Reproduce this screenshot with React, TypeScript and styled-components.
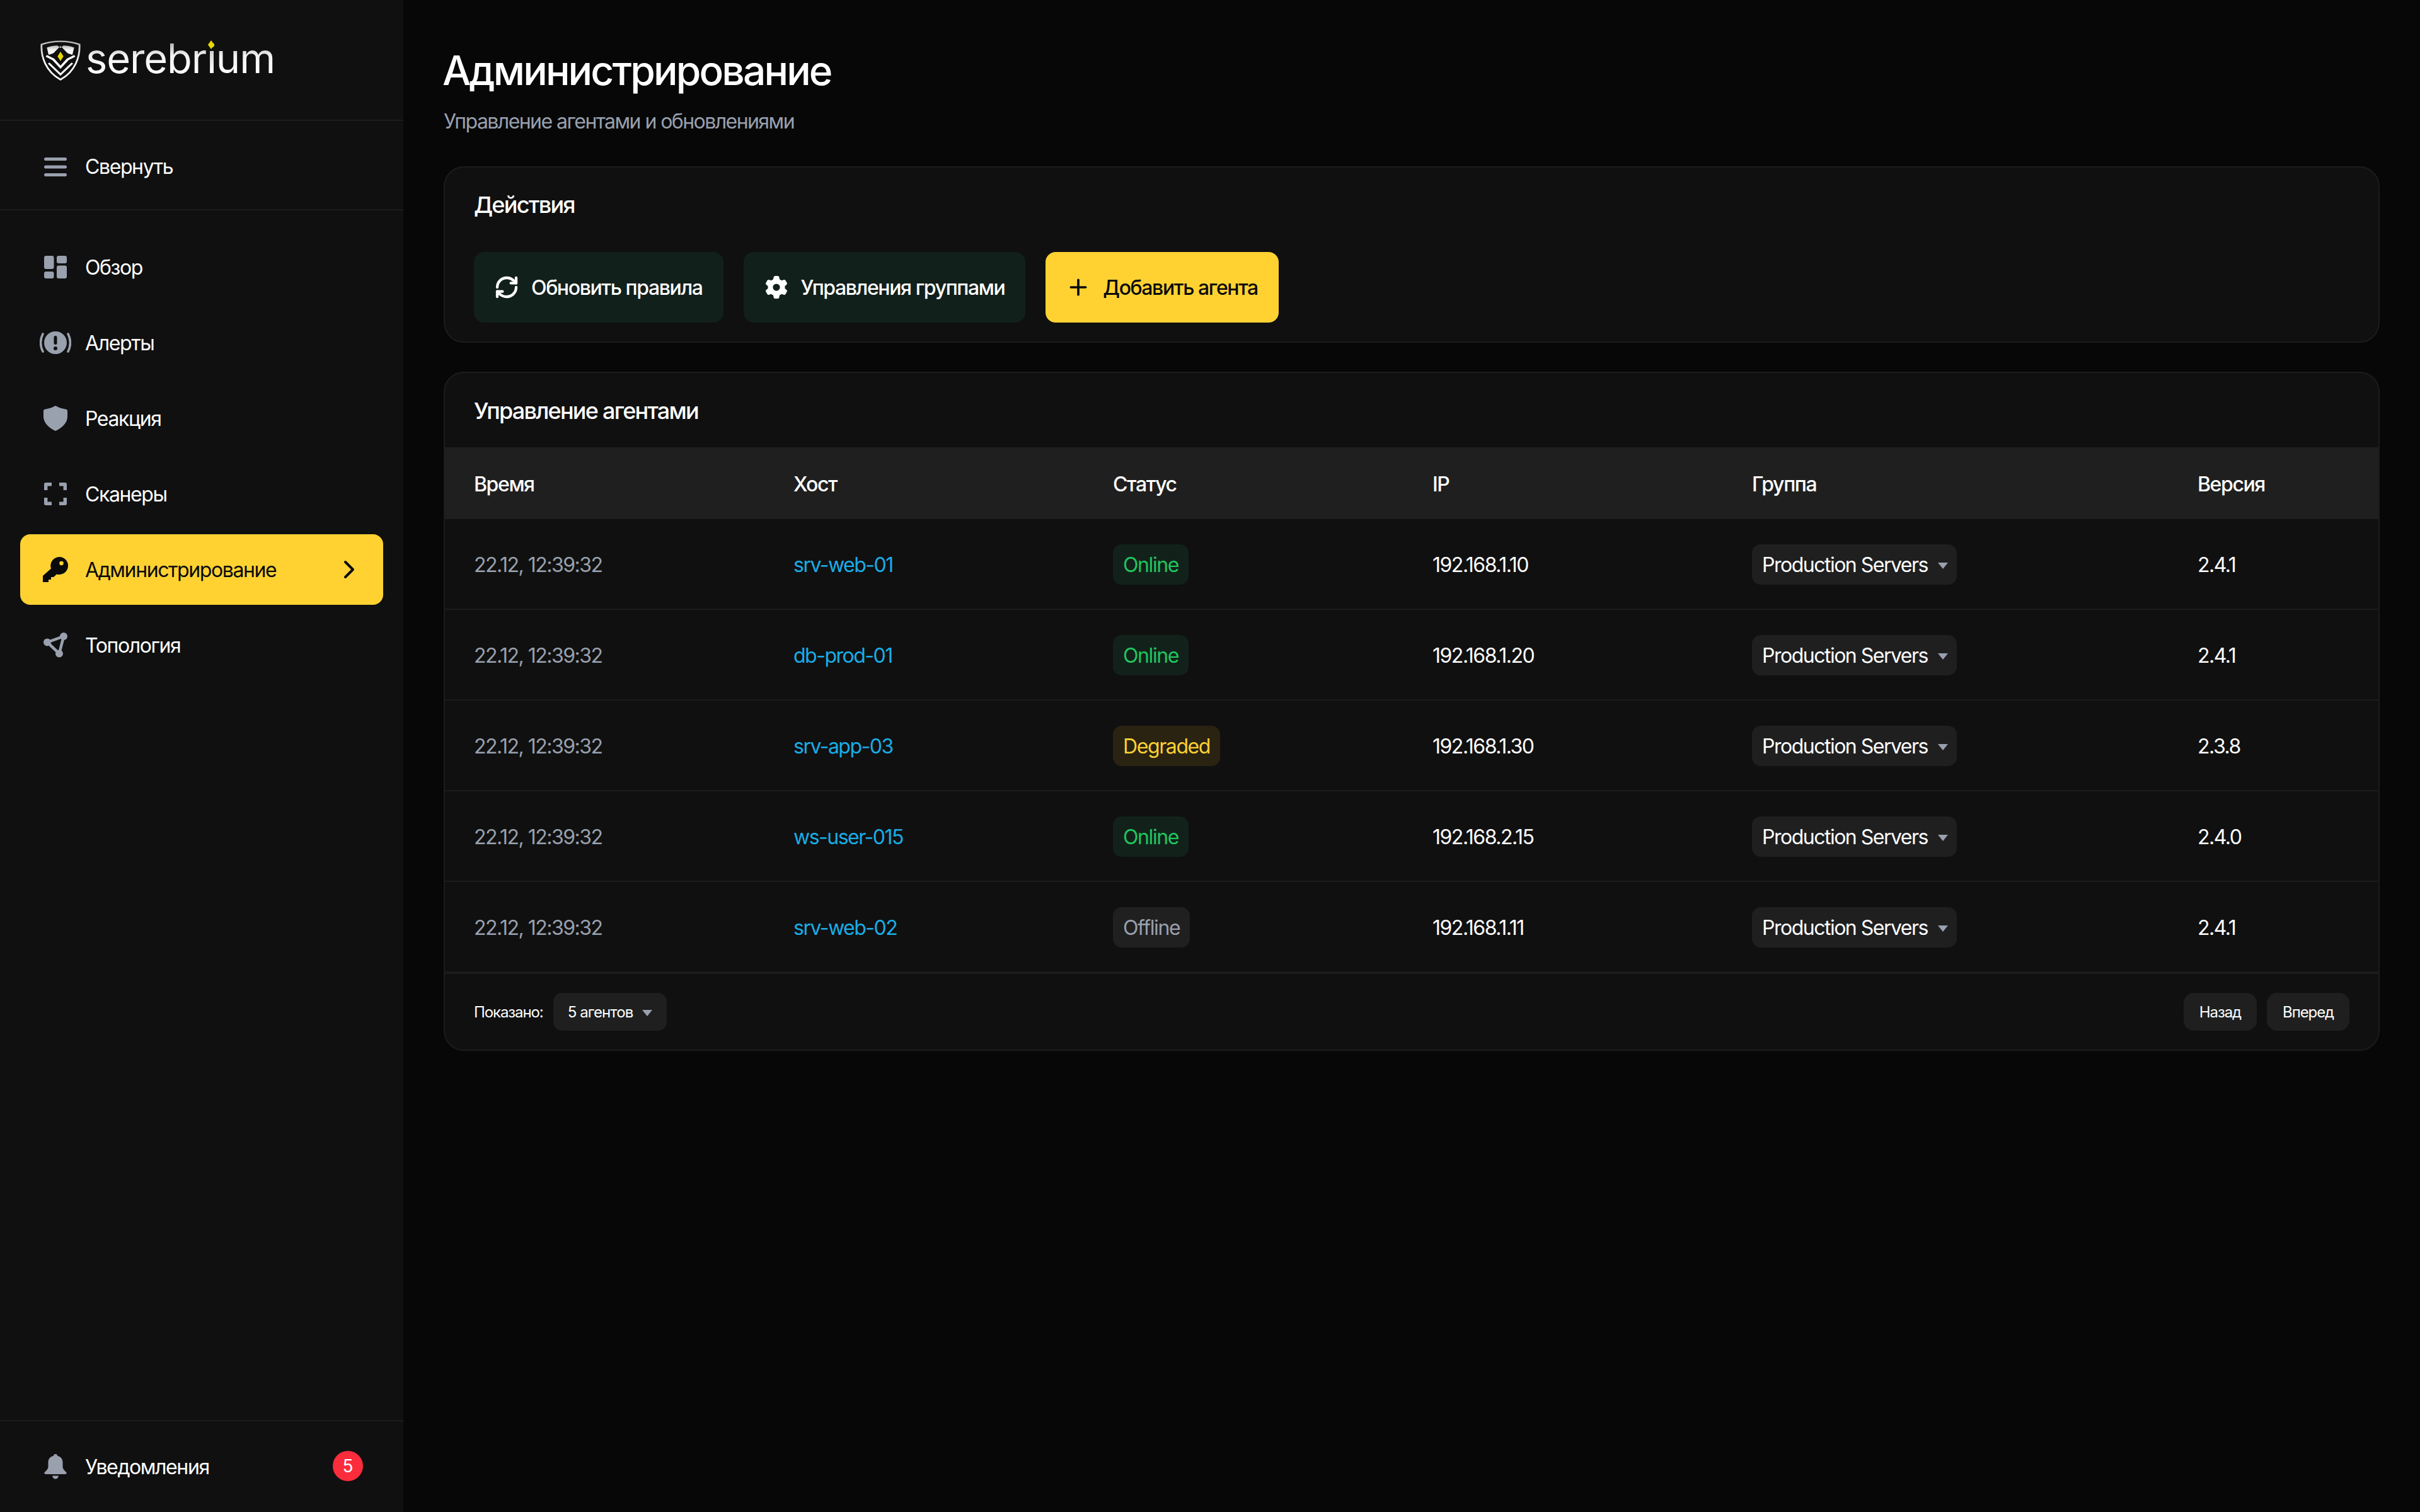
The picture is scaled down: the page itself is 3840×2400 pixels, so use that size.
import React from "react"
import styled, { createGlobalStyle } from "styled-components"
import { ChevronRight, Plus, RefreshCw } from "lucide-react"
import { FaGear } from "react-icons/fa6"

const GlobalStyle = createGlobalStyle`
  html, body {
    margin: 0;
    padding: 0;
    background: #070707;
  }
  * {
    box-sizing: border-box;
  }
`

const Page = styled.div`
  display: flex;
  width: 3840px;
  height: 2400px;
  overflow: hidden;
  background: #070707;
  color: #fff;
  font-family: Inter, "Noto Sans", sans-serif;
  font-size: 32px;
  letter-spacing: -1.4px;
`

const Sidebar = styled.aside`
  display: flex;
  flex-direction: column;
  flex: none;
  width: 640px;
  height: 100%;
  background: #101010;
`

const LogoBar = styled.div`
  display: flex;
  align-items: center;
  gap: 8px;
  height: 192px;
  padding: 0 0 4px 64px;
  border-bottom: 2px solid #1c1c1c;
`

const LogoMark = styled.svg`
  flex: none;
  margin-top: 6px;
`

const LogoText = styled.div`
  position: relative;
  font-size: 65px;
  line-height: 84px;
  letter-spacing: -1.1px;
  font-weight: 400;
  background: linear-gradient(180deg, #b4b4b4 20%, #f2f2f2 45%, #ffffff 85%);
  -webkit-background-clip: text;
  background-clip: text;
  color: transparent;
`

const LogoLetter = styled.span`
  background: linear-gradient(180deg, transparent 33%, #cfcfcf 33%, #ffffff 80%);
  -webkit-background-clip: text;
  background-clip: text;
  color: transparent;
`

const LogoDiamond = styled.i`
  position: absolute;
  left: 194px;
  top: 13px;
  width: 10px;
  height: 14px;
  background: #e8d800;
  clip-path: polygon(50% 0, 100% 50%, 50% 100%, 0 50%);
`

const CollapseBar = styled.div`
  display: flex;
  align-items: center;
  gap: 27px;
  height: 142px;
  padding: 5px 0 0 68px;
  border-bottom: 2px solid #1c1c1c;
`

const Nav = styled.nav`
  display: flex;
  flex-direction: column;
  flex: 1;
  gap: 8px;
  padding: 34px 32px 0;
`

const NavItem = styled.div<{ $active?: boolean }>`
  display: flex;
  align-items: center;
  gap: 27px;
  height: 112px;
  padding: 0 30px 0 36px;
  border-radius: 16px;
  background: ${(p) => (p.$active ? "#ffd232" : "transparent")};
  color: ${(p) => (p.$active ? "#0a0a0a" : "#fff")};
`

const IconSlot = styled.span`
  display: flex;
  align-items: center;
  justify-content: center;
  flex: none;
  width: 40px;
  height: 50px;
  color: #99a0ae;
`

const ActiveIconSlot = styled(IconSlot)`
  color: #0a0a0a;
`

const Grow = styled.span`
  flex: 1;
`

const NotifyBar = styled.div`
  display: flex;
  align-items: center;
  gap: 27px;
  height: 146px;
  padding: 0 64px 0 68px;
  border-top: 2px solid #1c1c1c;
`

const CountBadge = styled.span`
  display: flex;
  align-items: center;
  justify-content: center;
  width: 48px;
  height: 48px;
  border-radius: 50%;
  background: #fb2c3c;
  font-size: 28px;
  letter-spacing: 0;
  margin-top: -2px;
`

const Main = styled.main`
  flex: 1;
  display: flex;
  flex-direction: column;
  padding: 72px 64px 0;
`

const Title = styled.h1`
  margin: 0 0 0 -2px;
  font-size: 64px;
  line-height: 80px;
  font-weight: 500;
  letter-spacing: -2.8px;
`

const Subtitle = styled.p`
  margin: 20px 0 0;
  font-size: 32px;
  line-height: 42px;
  color: #99a0ae;
  letter-spacing: -1.56px;
`

const Card = styled.section`
  border: 2px solid #1c1c1c;
  border-radius: 32px;
  background: #101010;
  overflow: hidden;
`

const ActionsCard = styled(Card)`
  height: 280px;
  margin-top: 50px;
  padding: 0 46px;
`

const AgentsCard = styled(Card)`
  height: 1078px;
  margin-top: 46px;
`

const CardTitle = styled.h2`
  margin: 0;
  font-size: 36px;
  font-weight: 500;
  line-height: 118px;
  letter-spacing: -1.75px;
`

const AgentsTitle = styled(CardTitle)`
  padding: 3px 0 0 46px;
  line-height: 115px;
`

const ButtonRow = styled.div`
  display: flex;
  gap: 32px;
  margin-top: 16px;
`

const ActionButton = styled.button<{ $primary?: boolean }>`
  display: flex;
  align-items: center;
  gap: 19px;
  height: 112px;
  padding: 0 33px 0 32px;
  border: 0;
  border-radius: 16px;
  background: ${(p) => (p.$primary ? "#ffd232" : "#12201b")};
  color: ${(p) => (p.$primary ? "#0a0a0a" : "#fff")};
  font: inherit;
  font-weight: 500;
  letter-spacing: -1.4px;
`

const ButtonIcon = styled.span`
  display: flex;
  align-items: center;
  justify-content: center;
  flex: none;
  width: 40px;
`

const Row = styled.div`
  display: grid;
  grid-template-columns: 507px 507px 507px 507px 707px 1fr;
  align-items: center;
  height: 144px;
  padding: 2px 0 0 46px;
  border-bottom: 2px solid #1c1c1c;
  letter-spacing: -1.5px;
`

const HeadRow = styled(Row)`
  height: 114px;
  background: #1f1f1f;
  border-bottom: 0;
  font-weight: 500;
  letter-spacing: -1.4px;
`

const TimeCell = styled.span`
  color: #99a0ae;
`

const HostCell = styled.span`
  color: #18aee8;
`

const StatusBadge = styled.span<{ $tone: "online" | "degraded" | "offline" }>`
  justify-self: start;
  height: 64px;
  padding: 0 16px;
  border-radius: 14px;
  line-height: 65px;
  letter-spacing: -1.4px;
  color: ${(p) => ({ online: "#22c55e", degraded: "#fcd034", offline: "#99a0ae" })[p.$tone]};
  background: ${(p) => ({ online: "#12221b", degraded: "#2a2312", offline: "#202020" })[p.$tone]};
`

const SelectBox = styled.span`
  display: inline-flex;
  align-items: center;
  justify-self: start;
  gap: 16px;
  height: 64px;
  padding: 0 14px 0 16px;
  border-radius: 14px;
  background: #1f1f1f;
`

const Caret = styled.i`
  display: block;
  width: 0;
  height: 0;
  margin-top: 4px;
  border-left: 8px solid transparent;
  border-right: 8px solid transparent;
  border-top: 10px solid #99a0ae;
`

const Footer = styled.div`
  display: flex;
  align-items: center;
  justify-content: space-between;
  height: 126px;
  margin-top: -2px;
  padding: 0 46px 2px;
  border-top: 4px solid #1c1c1c;
  font-size: 24px;
  letter-spacing: -1.1px;
`

const FooterGroup = styled.div`
  display: flex;
  align-items: center;
  gap: 16px;
`

const FooterSelect = styled(SelectBox)`
  gap: 15px;
  height: 60px;
  padding: 0 23px;
  letter-spacing: -0.9px;
`

const PageButton = styled.span`
  display: flex;
  align-items: center;
  height: 60px;
  padding: 0 25px;
  border-radius: 16px;
  background: #1f1f1f;
`

const MenuIcon = () => (
  <svg width="36" height="30" viewBox="0 0 36 30" fill="currentColor">
    <rect width="36" height="5" rx="2.5" />
    <rect y="12.5" width="36" height="5" rx="2.5" />
    <rect y="25" width="36" height="5" rx="2.5" />
  </svg>
)

const GridIcon = () => (
  <svg width="36" height="36" viewBox="0 0 36 36" fill="currentColor">
    <rect width="15.5" height="21" rx="3" />
    <rect x="20" width="16" height="12" rx="3" />
    <rect y="25" width="15.5" height="11" rx="3" />
    <rect x="20" y="15.5" width="16" height="20.5" rx="3" />
  </svg>
)

const AlertIcon = () => (
  <svg width="50" height="36" viewBox="0 0 50 36" fill="currentColor" style={{ flex: "none" }}>
    <circle cx="25" cy="18" r="18" />
    <rect x="22.5" y="7" width="5" height="14" rx="2.5" fill="#101010" />
    <circle cx="25" cy="27" r="3" fill="#101010" />
    <path d="M5 4 C0.5 13 0.5 23 5 32" fill="none" stroke="currentColor" strokeWidth="3.6" strokeLinecap="round" />
    <path d="M45 4 C49.5 13 49.5 23 45 32" fill="none" stroke="currentColor" strokeWidth="3.6" strokeLinecap="round" />
  </svg>
)

const ShieldIcon = () => (
  <svg width="38" height="40" viewBox="0 0 38 46" preserveAspectRatio="none" fill="currentColor">
    <path d="M19 0 C24 3.5 30 5.5 36 6.5 Q38 7 38 9 V20 C38 31 29 41 19 46 C9 41 0 31 0 20 V9 Q0 7 2 6.5 C8 5.5 14 3.5 19 0 Z" />
  </svg>
)

const ScanIcon = () => (
  <svg width="36" height="36" viewBox="0 0 36 36" fill="none" stroke="currentColor" strokeWidth="5.4" strokeLinejoin="round">
    <path d="M2.7 12 V2.7 H12" />
    <path d="M24 2.7 H33.3 V12" />
    <path d="M2.7 24 V33.3 H12" />
    <path d="M24 33.3 H33.3 V24" />
  </svg>
)

const KeyIcon = () => (
  <svg width="40" height="40" viewBox="0 0 40 40" fill="currentColor">
    <path
      fillRule="evenodd"
      d="M26 0 A14 14 0 1 1 22 27.4 L17 32 H13 V36 H9 V40 H0 V30 L13 18.5 A14 14 0 0 1 26 0 Z M29.5 6.8 A3.3 3.3 0 1 0 29.5 13.4 A3.3 3.3 0 1 0 29.5 6.8 Z"
    />
  </svg>
)

const TopologyIcon = () => (
  <svg width="38" height="40" viewBox="0 0 38 40" fill="none" stroke="currentColor" strokeWidth="4.5">
    <path d="M32 6 L6 15.5 L25 33.5 Z" />
    <g fill="currentColor" stroke="none">
      <circle cx="32" cy="6" r="6" />
      <circle cx="6" cy="15.5" r="6" />
      <circle cx="25" cy="33.5" r="6" />
    </g>
  </svg>
)

const BellIcon = () => (
  <svg width="36" height="40" viewBox="0 0 36 48" preserveAspectRatio="none" fill="currentColor">
    <path d="M18 0 C20 0 21 1.5 21 3.2 C26.5 5 29.5 9.5 29.5 15.5 V24 C29.5 28.5 33 32 35.5 35 Q36.5 38 33 38.5 H3 Q-0.5 38 0.5 35 C3 32 6.5 28.5 6.5 24 V15.5 C6.5 9.5 9.5 5 15 3.2 C15 1.5 16 0 18 0 Z" />
    <path d="M13 41.5 H23 Q22 47.5 18 47.5 Q14 47.5 13 41.5 Z" />
  </svg>
)

const ShieldLogo = () => (
  <LogoMark width="64" height="64" viewBox="0 0 68 78" preserveAspectRatio="none">
    <defs>
      <linearGradient id="logoFill" x1="0" y1="0" x2="0" y2="1">
        <stop offset="0" stopColor="#b9b9b9" />
        <stop offset="0.45" stopColor="#f0f0f0" />
        <stop offset="1" stopColor="#ffffff" />
      </linearGradient>
    </defs>
    <path d="M34 2 C45 2 56 4 66 8 C67 32 59 60 34 76 C9 60 1 32 2 8 C12 4 23 2 34 2 Z" fill="none" stroke="url(#logoFill)" strokeWidth="3" />
    <path d="M11 14 C17 11 24 10 29 10 L34 15 L39 10 C44 10 51 11 57 14 L54 28 L46 25 L34 11 L22 25 L14 28 Z" fill="url(#logoFill)" />
    <path d="M10 30 L22 37 L34 52 L46 37 L58 30" fill="none" stroke="#fff" strokeWidth="4" />
    <path d="M14 44 L34 66 L54 44" fill="none" stroke="#fff" strokeWidth="3.5" />
    <path d="M34 22 L39 31 L34 40 L29 31 Z" fill="#e8d800" />
  </LogoMark>
)

const rows = [
  { host: "srv-web-01", status: "Online", tone: "online", ip: "192.168.1.10", version: "2.4.1" },
  { host: "db-prod-01", status: "Online", tone: "online", ip: "192.168.1.20", version: "2.4.1" },
  { host: "srv-app-03", status: "Degraded", tone: "degraded", ip: "192.168.1.30", version: "2.3.8" },
  { host: "ws-user-015", status: "Online", tone: "online", ip: "192.168.2.15", version: "2.4.0" },
  { host: "srv-web-02", status: "Offline", tone: "offline", ip: "192.168.1.11", version: "2.4.1" },
] as const

export default function App() {
  return (
    <Page>
      <GlobalStyle />
      <Sidebar>
        <LogoBar>
          <ShieldLogo />
          <LogoText>
            serebr<LogoLetter>i</LogoLetter>um
            <LogoDiamond />
          </LogoText>
        </LogoBar>
        <CollapseBar>
          <IconSlot>
            <MenuIcon />
          </IconSlot>
          <span>Свернуть</span>
        </CollapseBar>
        <Nav>
          <NavItem>
            <IconSlot>
              <GridIcon />
            </IconSlot>
            <span>Обзор</span>
          </NavItem>
          <NavItem>
            <IconSlot>
              <AlertIcon />
            </IconSlot>
            <span>Алерты</span>
          </NavItem>
          <NavItem>
            <IconSlot>
              <ShieldIcon />
            </IconSlot>
            <span>Реакция</span>
          </NavItem>
          <NavItem>
            <IconSlot>
              <ScanIcon />
            </IconSlot>
            <span>Сканеры</span>
          </NavItem>
          <NavItem $active>
            <ActiveIconSlot>
              <KeyIcon />
            </ActiveIconSlot>
            <Grow>Администрирование</Grow>
            <ChevronRight size={48} strokeWidth={2} />
          </NavItem>
          <NavItem>
            <IconSlot>
              <TopologyIcon />
            </IconSlot>
            <span>Топология</span>
          </NavItem>
        </Nav>
        <NotifyBar>
          <IconSlot>
            <BellIcon />
          </IconSlot>
          <Grow>Уведомления</Grow>
          <CountBadge>5</CountBadge>
        </NotifyBar>
      </Sidebar>
      <Main>
        <Title>Администрирование</Title>
        <Subtitle>Управление агентами и обновлениями</Subtitle>
        <ActionsCard>
          <CardTitle>Действия</CardTitle>
          <ButtonRow>
            <ActionButton>
              <ButtonIcon>
                <RefreshCw size={40} strokeWidth={2.6} />
              </ButtonIcon>
              Обновить правила
            </ActionButton>
            <ActionButton>
              <ButtonIcon>
                <FaGear size={36} />
              </ButtonIcon>
              Управления группами
            </ActionButton>
            <ActionButton $primary>
              <ButtonIcon>
                <Plus size={44} strokeWidth={2.2} />
              </ButtonIcon>
              Добавить агента
            </ActionButton>
          </ButtonRow>
        </ActionsCard>
        <AgentsCard>
          <AgentsTitle>Управление агентами</AgentsTitle>
          <HeadRow>
            <span>Время</span>
            <span>Хост</span>
            <span>Статус</span>
            <span>IP</span>
            <span>Группа</span>
            <span>Версия</span>
          </HeadRow>
          {rows.map((row) => (
            <Row key={row.host}>
              <TimeCell>22.12, 12:39:32</TimeCell>
              <HostCell>{row.host}</HostCell>
              <StatusBadge $tone={row.tone}>{row.status}</StatusBadge>
              <span>{row.ip}</span>
              <SelectBox>
                Production Servers
                <Caret />
              </SelectBox>
              <span>{row.version}</span>
            </Row>
          ))}
          <Footer>
            <FooterGroup>
              <span>Показано:</span>
              <FooterSelect>
                5 агентов
                <Caret />
              </FooterSelect>
            </FooterGroup>
            <FooterGroup>
              <PageButton>Назад</PageButton>
              <PageButton>Вперед</PageButton>
            </FooterGroup>
          </Footer>
        </AgentsCard>
      </Main>
    </Page>
  )
}
